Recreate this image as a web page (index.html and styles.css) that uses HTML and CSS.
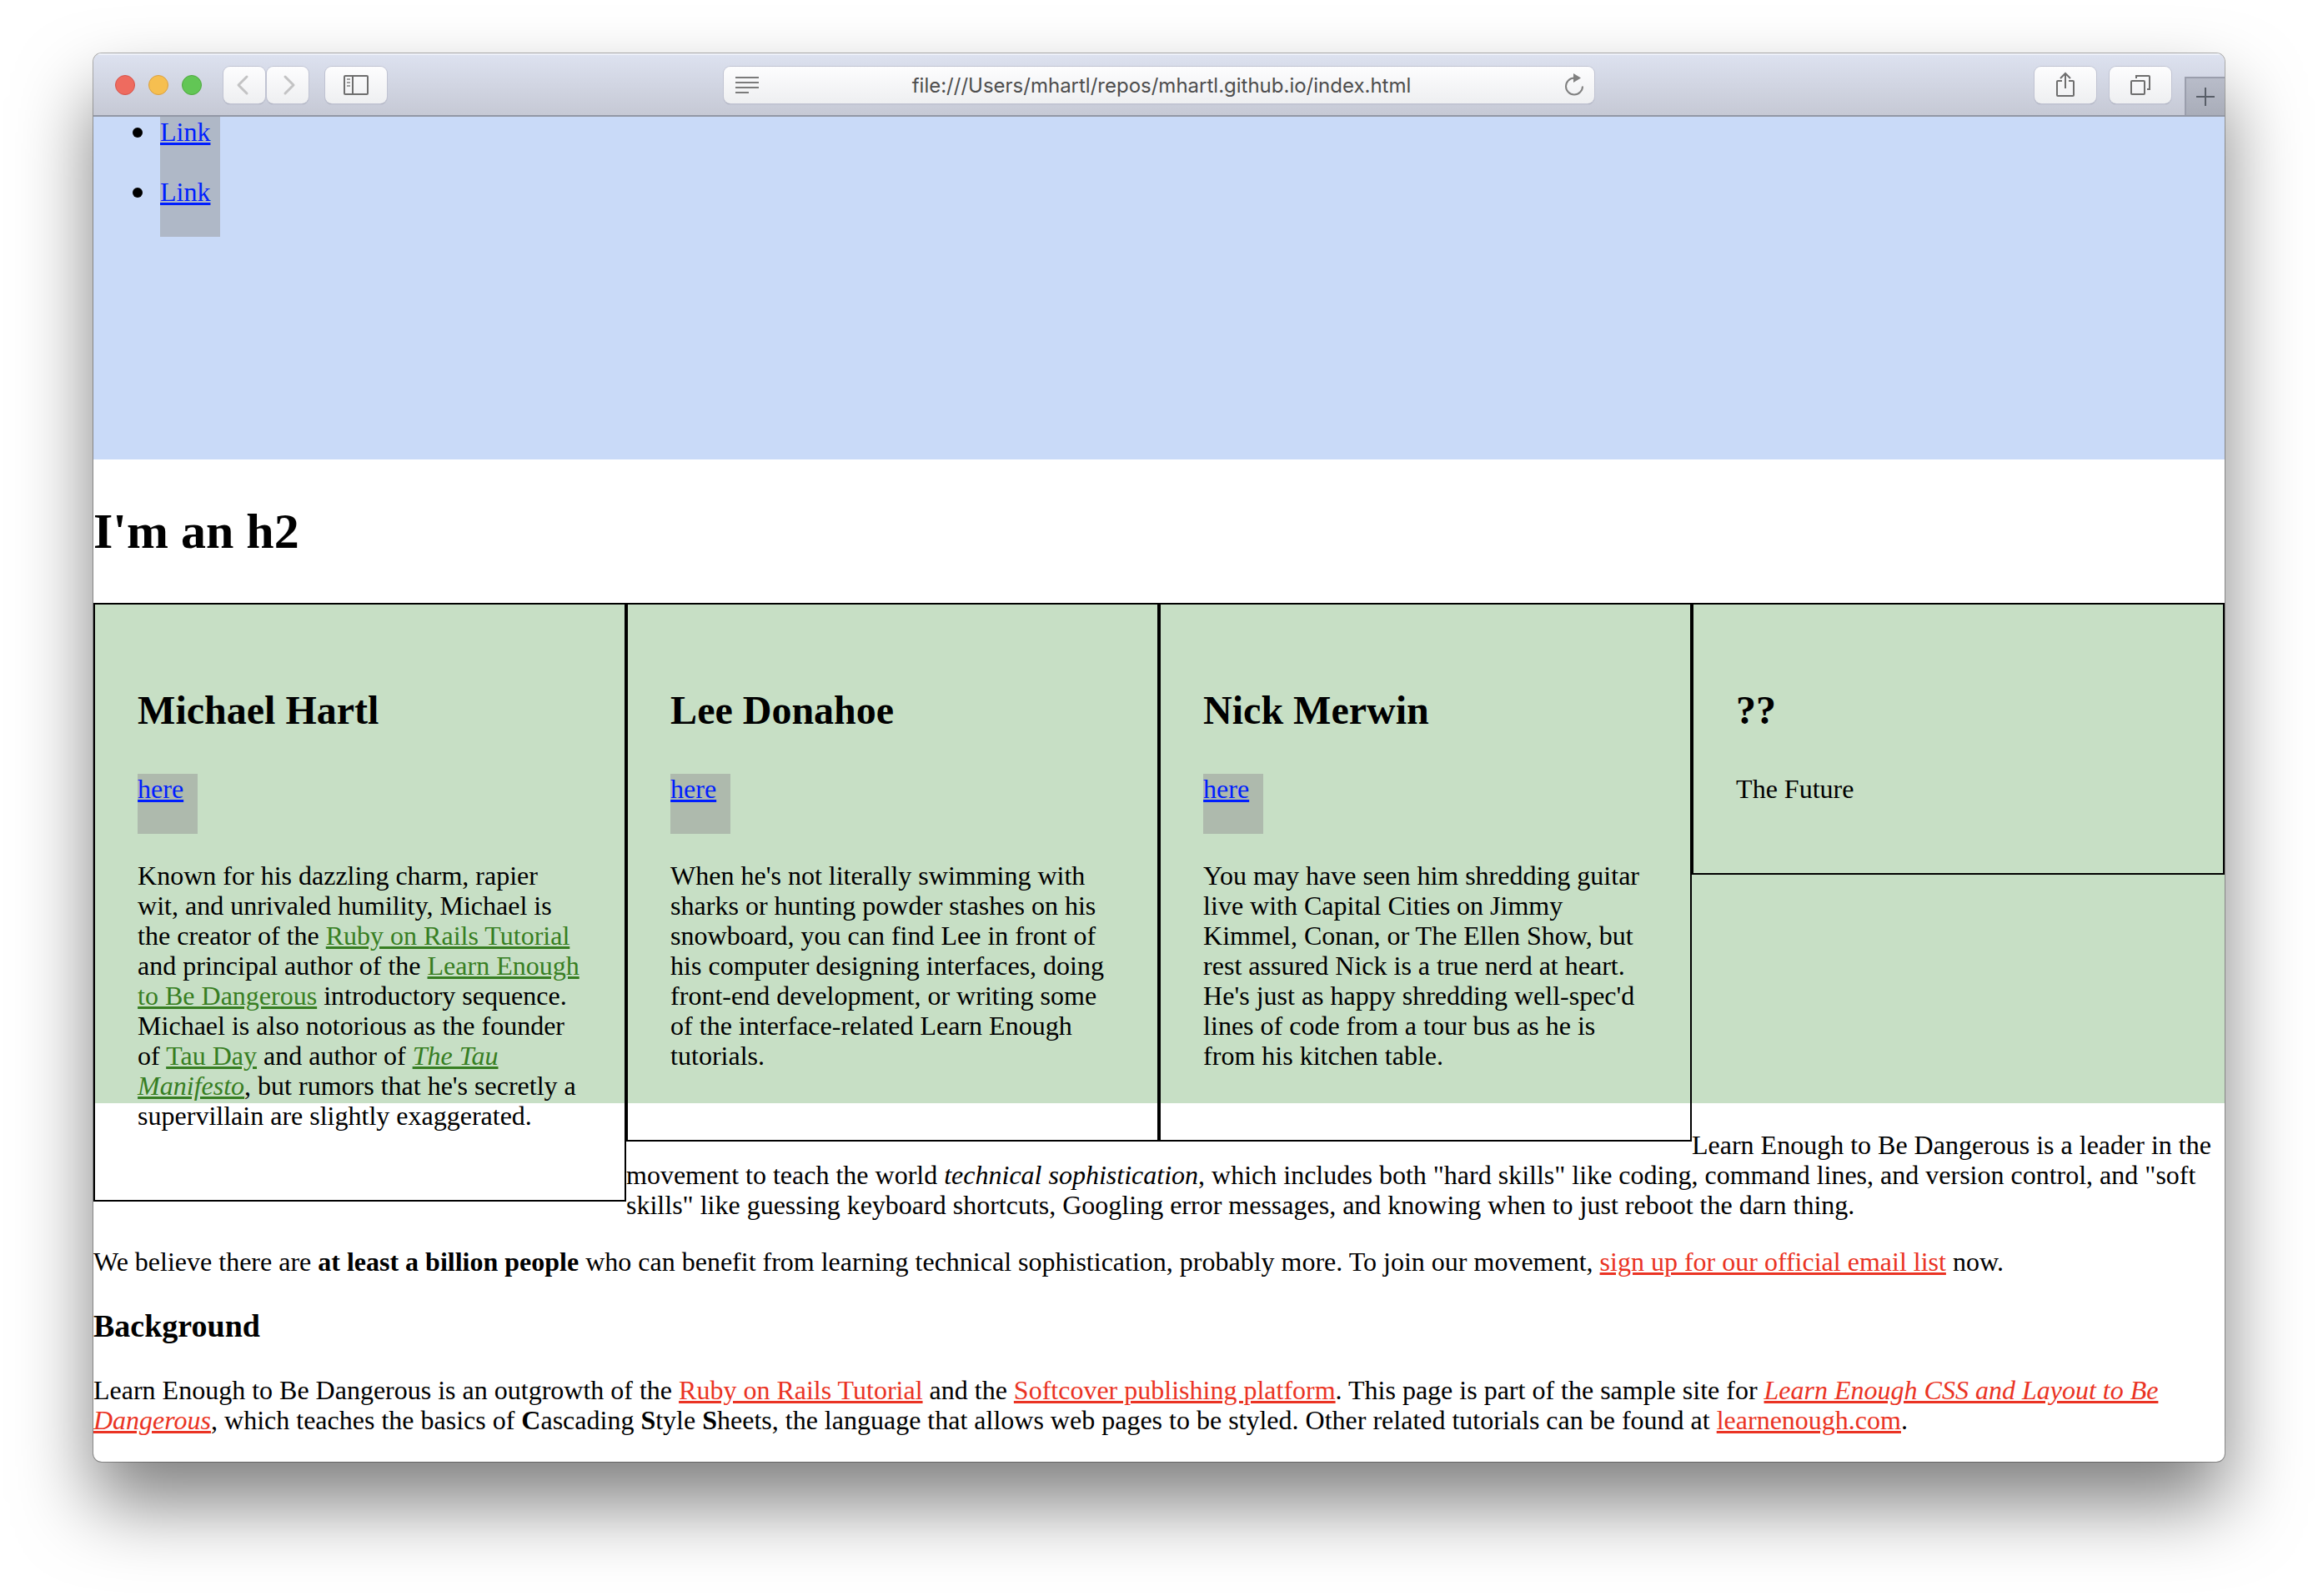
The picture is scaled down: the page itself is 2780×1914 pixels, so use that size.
FILE: index.html
```html
<!DOCTYPE html>
<html lang="en">
<head>
<meta charset="utf-8">
<title>Learn Enough to Be Dangerous</title>
<link rel="stylesheet" href="styles.css">
</head>
<body>
<div class="window">
  <header class="toolbar">
    <div class="tools tools-left">
      <div class="lights">
        <button class="light light-close" aria-label="Close"></button>
        <button class="light light-min" aria-label="Minimize"></button>
        <button class="light light-full" aria-label="Full screen"></button>
      </div>
      <div class="nav-pair">
        <button class="tool tool-nav" aria-label="Back">
          <svg width="50" height="44" viewBox="0 0 50 44"><path d="M28 12 18 22l10 10" fill="none" stroke="#c3c3c4" stroke-width="3" stroke-linecap="round" stroke-linejoin="round"/></svg>
        </button>
        <button class="tool tool-nav" aria-label="Forward">
          <svg width="50" height="44" viewBox="0 0 50 44"><path d="m22 12 10 10-10 10" fill="none" stroke="#c3c3c4" stroke-width="3" stroke-linecap="round" stroke-linejoin="round"/></svg>
        </button>
      </div>
      <button class="tool" aria-label="Show sidebar">
        <svg width="74" height="44" viewBox="0 0 74 44"><g fill="none" stroke="#6e6e6e" stroke-width="2"><rect x="23" y="11" width="28" height="22" rx="1"/><path d="M33 11v22"/></g><path d="M26 15h4M26 19h4M26 23h4" stroke="#a0a0a0" stroke-width="2"/></svg>
      </button>
    </div>
    <div class="address">
      <button class="plain" aria-label="Reader view">
        <svg width="28" height="22" viewBox="0 0 28 22"><path d="M0 2h28M0 8h28M0 14h28M0 20h16" stroke="#7b7b7b" stroke-width="2"/></svg>
      </button>
      <input class="address-input" type="text" aria-label="Address" value="file:///Users/mhartl/repos/mhartl.github.io/index.html">
      <button class="plain" aria-label="Reload">
        <svg width="24" height="28" viewBox="0 0 24 28"><path d="M12 5.500A10 10 0 1 0 22 15.500" fill="none" stroke="#808080" stroke-width="2"/><path d="M11 0v11l9-5.500z" fill="#808080"/></svg>
      </button>
    </div>
    <div class="tools tools-right">
      <button class="tool" aria-label="Share">
        <svg width="74" height="44" viewBox="0 0 74 44"><g fill="none" stroke="#6e6e6e" stroke-width="2"><path d="M33 17h-5a1 1 0 0 0-1 1v16a1 1 0 0 0 1 1h18a1 1 0 0 0 1-1V18a1 1 0 0 0-1-1h-5M37 26V8M31 14l6-6 6 6"/></g></svg>
      </button>
      <button class="tool" aria-label="Show all tabs">
        <svg width="74" height="44" viewBox="0 0 74 44"><g fill="none" stroke="#6e6e6e" stroke-width="2"><rect x="26" y="17" width="16" height="16" rx="1"/><path d="M32 14v-3h15a1 1 0 0 1 1 1v15h-3"/></g></svg>
      </button>
      <button class="new-tab" aria-label="New tab">
        <svg width="22" height="22" viewBox="0 0 22 22"><path d="M11 0v22M0 11h22" stroke="#585e68" stroke-width="2"/></svg>
      </button>
    </div>
  </header>
  <main class="page">
    <nav class="hero">
      <ul class="links">
        <li><a class="box" href="#">Link</a></li>
        <li><a class="box" href="#">Link</a></li>
      </ul>
    </nav>
    <h1>I'm an h2</h1>
    <section class="bios">
      <div class="bio">
        <h2>Michael Hartl</h2>
        <a class="box" href="#">here</a>
        <p>Known for his dazzling charm, rapier wit, and unrivaled humility, Michael is the creator of the <a href="#">Ruby on Rails Tutorial</a> and principal author of the <a href="#">Learn Enough to Be Dangerous</a> introductory sequence. Michael is also notorious as the founder of <a href="#">Tau Day</a> and author of <a href="#"><em>The Tau Manifesto</em></a>, but rumors that he's secretly a supervillain are slightly exaggerated.</p>
      </div>
      <div class="bio">
        <h2>Lee Donahoe</h2>
        <a class="box" href="#">here</a>
        <p>When he's not literally swimming with sharks or hunting powder stashes on his snowboard, you can find Lee in front of his computer designing interfaces, doing front-end development, or writing some of the interface-related Learn Enough tutorials.</p>
      </div>
      <div class="bio">
        <h2>Nick Merwin</h2>
        <a class="box" href="#">here</a>
        <p>You may have seen him shredding guitar live with Capital Cities on Jimmy Kimmel, Conan, or The Ellen Show, but rest assured Nick is a true nerd at heart. He's just as happy shredding well-spec'd lines of code from a tour bus as he is from his kitchen table.</p>
      </div>
      <div class="bio">
        <h2>??</h2>
        <p>The Future</p>
      </div>
    </section>
    <p>Learn Enough to Be Dangerous is a leader in the movement to teach the world <em>technical sophistication</em>, which includes both "hard skills" like coding, command lines, and version control, and "soft skills" like guessing keyboard shortcuts, Googling error messages, and knowing when to just reboot the darn thing.</p>
    <p>We believe there are <strong>at least a billion people</strong> who can benefit from learning technical sophistication, probably more. To join our movement, <a href="#">sign up for our official email list</a> now.</p>
    <h3>Background</h3>
    <p>Learn Enough to Be Dangerous is an outgrowth of the <a href="#">Ruby on Rails Tutorial</a> and the <a href="#">Softcover publishing platform</a>. This page is part of the sample site for <a href="#"><em>Learn Enough CSS and Layout to Be Dangerous</em></a>, which teaches the basics of <strong>C</strong>ascading <strong>S</strong>tyle <strong>S</strong>heets, the language that allows web pages to be styled. Other related tutorials can be found at <a href="#">learnenough.com</a>.</p>
  </main>
</div>
</body>
</html>
```
FILE: styles.css
```css
* {
  box-sizing: border-box;
}

body {
  margin: 0;
  padding: 64px 112px 160px;
  background: #fff;
}

button {
  padding: 0;
  border: 0;
  font: inherit;
}

svg {
  display: block;
}

/* Browser window */
.window {
  overflow: hidden;
  border-radius: 10px;
  background: #fff;
  box-shadow: 0 0 0 1px rgba(0, 0, 0, 0.3), 0 50px 90px rgba(0, 0, 0, 0.5);
}

.toolbar {
  display: grid;
  grid-template-columns: 1fr minmax(0, 1044px) 1fr;
  height: 76px;
  border-bottom: 2px solid #9297a5;
  background: linear-gradient(#dde2f0, #c6c9d5);
  box-shadow: inset 0 2px #eef1f8;
}

.tools {
  display: flex;
  align-items: flex-start;
  padding-top: 16px;
}

.tools-left {
  padding-left: 26px;
}

.tools-right {
  justify-content: flex-end;
  gap: 16px;
}

.lights {
  display: flex;
  gap: 16px;
  padding-top: 10px;
  margin-right: 26px;
}

.light {
  width: 24px;
  height: 24px;
  border: 1px solid;
  border-radius: 50%;
}

.light-close {
  border-color: #d7544b;
  background: #ee6b5f;
}

.light-min {
  border-color: #dba040;
  background: #f6bf50;
}

.light-full {
  border-color: #4ea93f;
  background: #62c655;
}

.nav-pair {
  display: flex;
  gap: 2px;
  margin-right: 20px;
}

.tool,
.address {
  height: 44px;
  border-radius: 8px;
  background: linear-gradient(#fdfdfe, #eeeff1);
  box-shadow: 0 0 0 1px #c0c3d2, 0 1px 1px #83879a;
}

.tool {
  width: 74px;
}

.tool-nav {
  width: 50px;
}

.address {
  display: flex;
  align-items: center;
  margin-top: 16px;
  padding: 0 12px 0 14px;
}

.address-input {
  flex: 1;
  min-width: 0;
  padding: 2px 0 0;
  border: 0;
  outline: 0;
  background: none;
  color: #4d4d4d;
  font: 24px/32px Inter, sans-serif;
  text-align: center;
}

.plain {
  background: none;
}

.new-tab {
  display: grid;
  place-items: center;
  width: 48px;
  height: 46px;
  margin-top: 12px;
  border-top: 2px solid #9a9eac;
  border-left: 2px solid #9a9eac;
  background: linear-gradient(#b8bcc9, #a9adb9);
}

/* Web page */
.page {
  display: flow-root;
  color: #000;
  font: 32px/36px "Liberation Serif", serif;
}

.page p {
  margin: 32px 0;
}

.page a {
  color: #ea3323;
}

.page h1 {
  margin: 52px 0;
  font-size: 60px;
  line-height: 68px;
}

.page h2 {
  margin: 48px 0;
  font-size: 48px;
  line-height: 56px;
}

.page h3 {
  margin: 37px 0;
  font-size: 38px;
  line-height: 44px;
}

.hero {
  height: 411px;
  background: #c9daf8;
}

.links {
  margin: 0;
  padding-left: 47px;
  list-style: none;
}

.links li {
  display: flex;
  gap: 21px;
}

.links li::before {
  content: "";
  width: 12px;
  height: 12px;
  margin-top: 13px;
  border-radius: 50%;
  background: #000;
}

.page .box {
  display: block;
  width: 72px;
  height: 72px;
  background: rgba(150, 150, 150, 0.5);
  color: #001eff;
}

/* The bios are taller than the section, and later text wraps around them */
.bios {
  height: 600px;
  background: #c7dfc5;
}

.bio {
  float: left;
  width: 25%;
  padding: 2%;
  border: 2px solid #000;
}

.bio a {
  color: #377e22;
}

.page .bio p a {
  color: #377e22;
}
```
